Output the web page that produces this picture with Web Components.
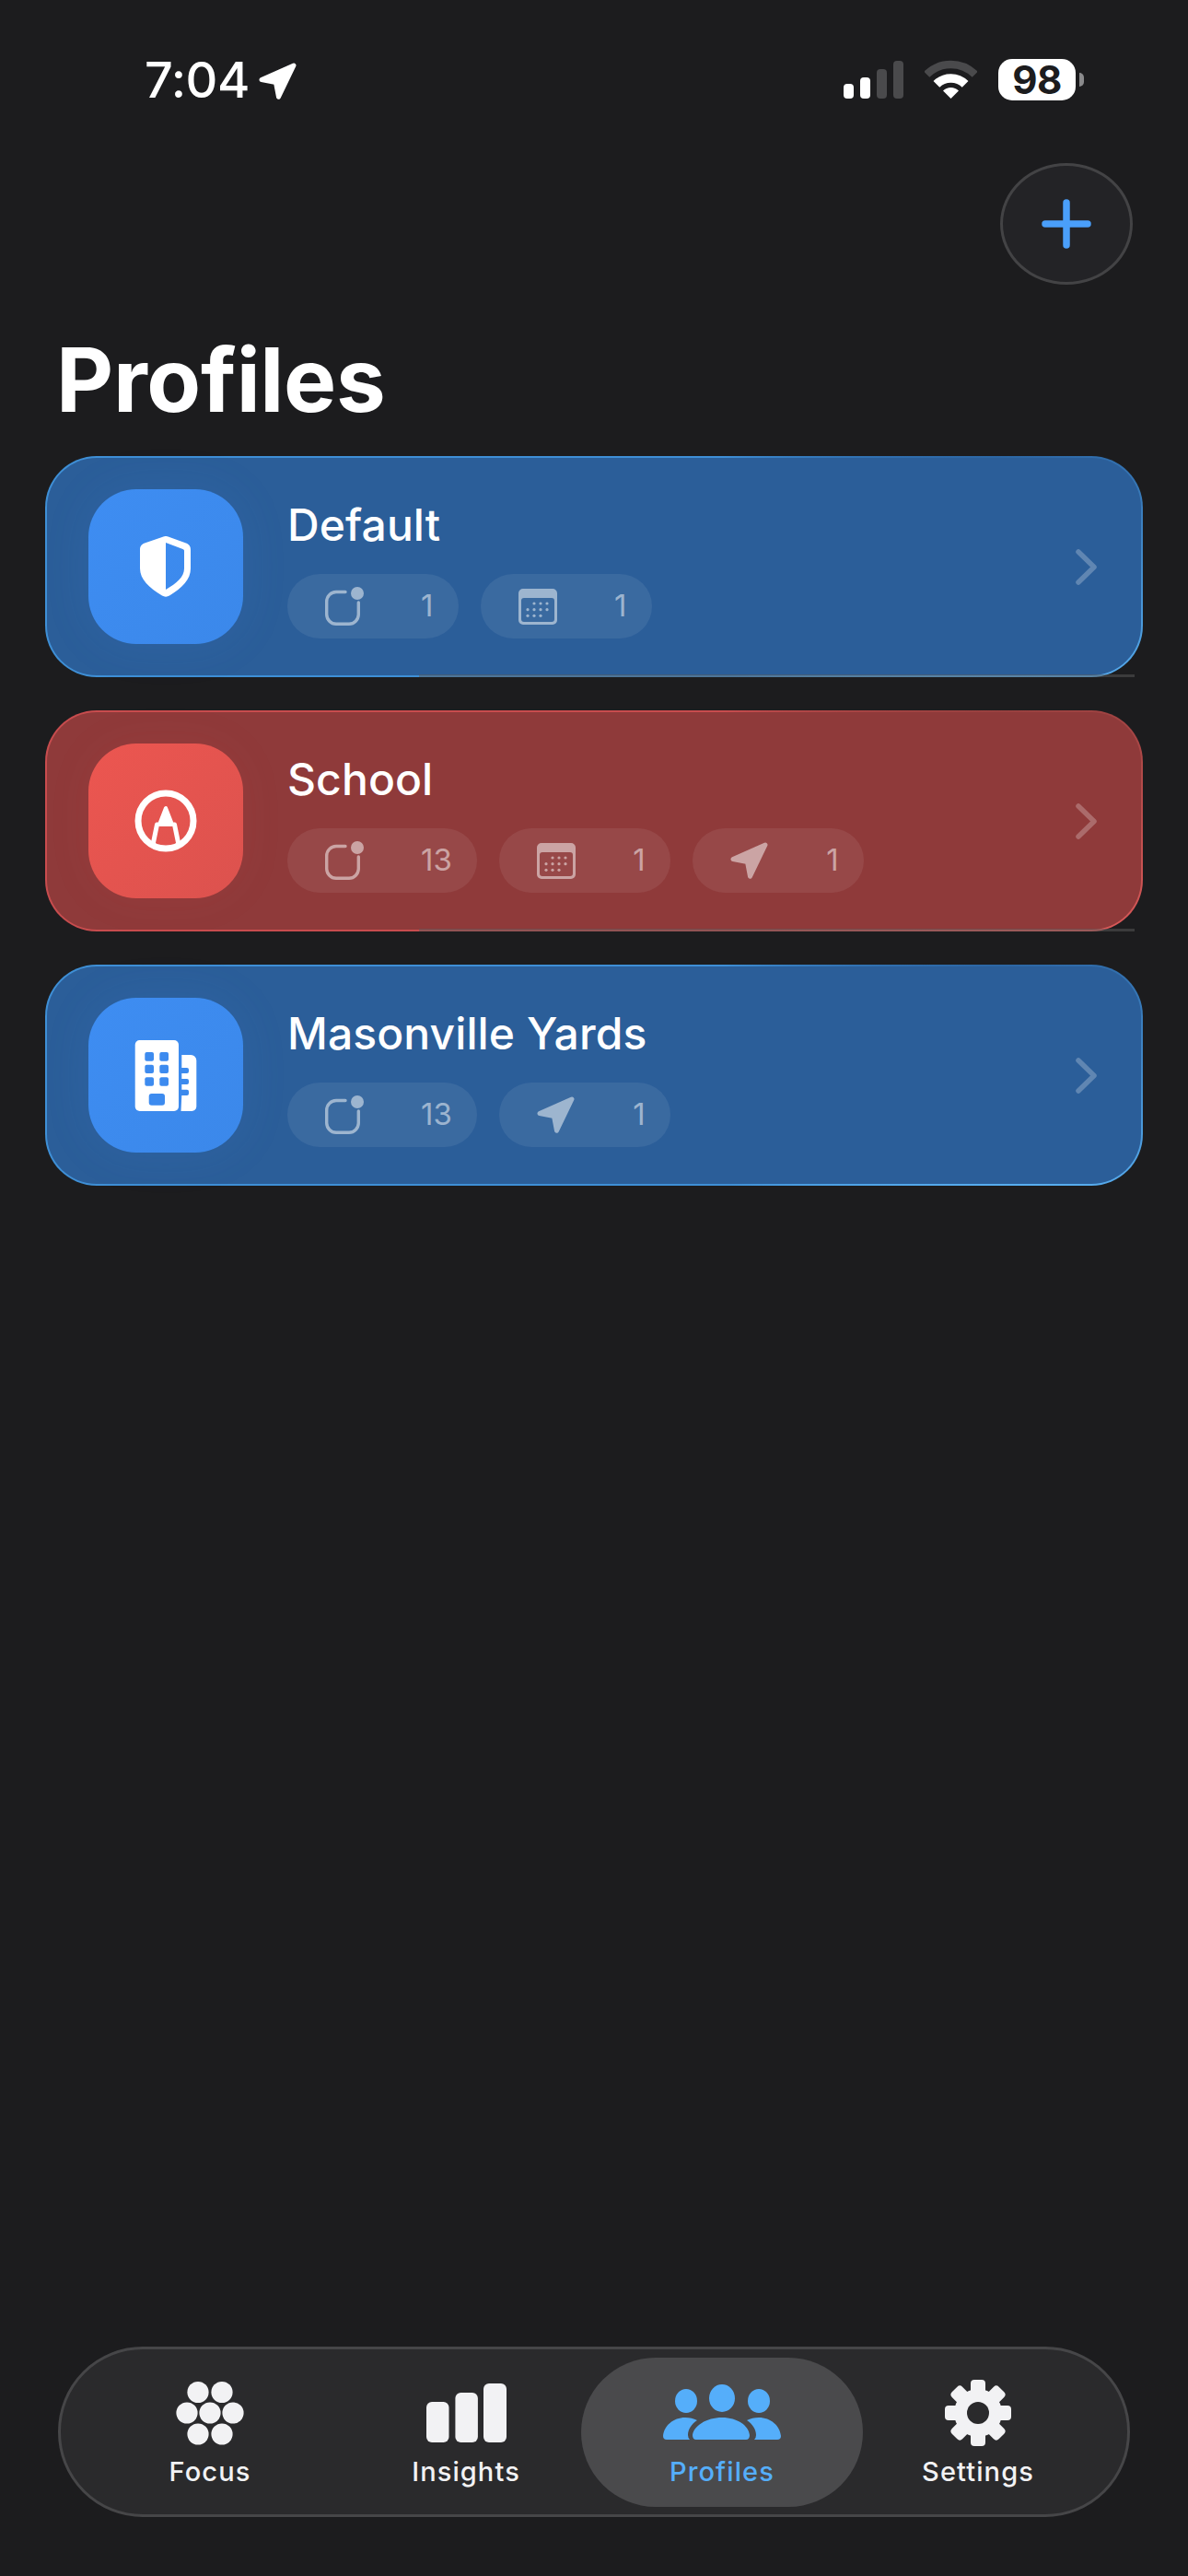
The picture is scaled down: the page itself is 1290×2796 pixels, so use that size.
<!DOCTYPE html>
<html lang="en">
<head>
<meta charset="utf-8">
<title>Profiles</title>
<style>
  html, body { margin: 0; background: #1c1c1e; }
  body { font-family: Inter, "Noto Sans", sans-serif; color: #fff; }
</style>
</head>
<body>
<profiles-screen>
  <status-bar slot="status"></status-bar>
  <add-button slot="action"></add-button>
  <span slot="title">Profiles</span>

  <profile-card tone="blue" separator>
    <tile-icon slot="icon" kind="shield"></tile-icon>
    <span slot="name">Default</span>
    <info-pill kind="reminder" count="1"></info-pill>
    <info-pill kind="calendar" count="1"></info-pill>
  </profile-card>

  <profile-card tone="red" separator>
    <tile-icon slot="icon" kind="pencil"></tile-icon>
    <span slot="name">School</span>
    <info-pill kind="reminder" count="13"></info-pill>
    <info-pill kind="calendar" count="1"></info-pill>
    <info-pill kind="location" count="1"></info-pill>
  </profile-card>

  <profile-card tone="blue">
    <tile-icon slot="icon" kind="building"></tile-icon>
    <span slot="name">Masonville Yards</span>
    <info-pill kind="reminder" count="13"></info-pill>
    <info-pill kind="location" count="1"></info-pill>
  </profile-card>

  <tab-bar slot="tabs">
    <tab-item kind="focus">Focus</tab-item>
    <tab-item kind="insights">Insights</tab-item>
    <tab-item kind="profiles" active>Profiles</tab-item>
    <tab-item kind="settings">Settings</tab-item>
  </tab-bar>
</profiles-screen>

<script>
const define = (name, css, html, setup) => {
  customElements.define(name, class extends HTMLElement {
    constructor() {
      super();
      this.attachShadow({ mode: 'open' });
    }
    connectedCallback() {
      if (this.shadowRoot.childElementCount) return;
      this.shadowRoot.innerHTML = `<style>${css}</style>${typeof html === 'function' ? html(this) : html}`;
      if (setup) setup(this);
    }
  });
};

const arrow = (w, h, color) => `<svg width="${w}" height="${h}" viewBox="0 0 41 40" fill="${color}" stroke="${color}" stroke-width="5" stroke-linejoin="round"><path d="M3 18.5 38 3 21.5 37.2 18.5 21.5Z"/></svg>`;

const pillIcons = {
  reminder: `<svg width="42" height="42" viewBox="0 0 42 42" fill="none" stroke="currentColor" stroke-width="3.400" stroke-linecap="round"><path d="M22 5.500H12A10.500 10.500 0 0 0 1.700 16V30A10.500 10.500 0 0 0 12 40.300H26A10.500 10.500 0 0 0 36.300 30V17"/><circle cx="35" cy="7" r="7" fill="currentColor" stroke="none"/></svg>`,
  calendar: `<svg width="42" height="39" viewBox="0 0 42 39" fill="currentColor"><path fill-rule="evenodd" d="M5 0H37a5 5 0 0 1 5 5V34a5 5 0 0 1-5 5H5a5 5 0 0 1-5-5V5a5 5 0 0 1 5-5ZM6 10a3 3 0 0 0-3 3V33a3 3 0 0 0 3 3H36a3 3 0 0 0 3-3V13a3 3 0 0 0-3-3Z"/><g><circle cx="17" cy="16" r="1.600"/><circle cx="24" cy="16" r="1.600"/><circle cx="31" cy="16" r="1.600"/><circle cx="10" cy="22.700" r="1.600"/><circle cx="17" cy="22.700" r="1.600"/><circle cx="24" cy="22.700" r="1.600"/><circle cx="31" cy="22.700" r="1.600"/><circle cx="10" cy="29.300" r="1.600"/><circle cx="17" cy="29.300" r="1.600"/><circle cx="24" cy="29.300" r="1.600"/></g></svg>`,
  location: arrow(41, 40, 'currentColor')
};

const tileIcons = {
  shield: `<path fill="#fff" fill-rule="evenodd" d="M84 51C85 51 86 51 88 52L106 58.500C109.500 60 111 62 111 66V86C111 98 102 107 88 115.500C85.500 117 82.500 117 80 115.500C66 107 56 98 56 86V66C56 62 57.500 60 61 58.500L80 52C82 51 83 51 84 51ZM84 58V109C96 102 104 95 104 86V67C104 66 103.500 65.500 102.500 65Z"/>`,
  pencil: `<circle cx="84" cy="84" r="30" fill="none" stroke="#fff" stroke-width="7"/><path d="M84 70 77 88H91Z" fill="#fff" stroke="#fff" stroke-width="4" stroke-linejoin="round"/><path d="M74.500 88 70 110M93.500 88 98 110" fill="none" stroke="#fff" stroke-width="5" stroke-linecap="round"/>`,
  building: `<rect x="50.700" y="46" width="47.300" height="77" rx="5" fill="#fff"/><g fill="#3d8bef"><rect x="61.300" y="59" width="9.700" height="9.700" rx="2"/><rect x="77.300" y="59" width="9.700" height="9.700" rx="2"/><rect x="61.300" y="72.700" width="9.700" height="9.300" rx="2"/><rect x="77.300" y="72.700" width="9.700" height="9.300" rx="2"/><rect x="61.300" y="86.300" width="9.700" height="9.400" rx="2"/><rect x="77.300" y="86.300" width="9.700" height="9.400" rx="2"/><rect x="65.700" y="104" width="17.300" height="12.700" rx="3"/></g><path fill="#fff" d="M101.300 62H111.300A6 6 0 0 1 117.300 68V118A5 5 0 0 1 112.300 123H100.500L101.300 106H107A2 2 0 0 0 109 104V101.700A2 2 0 0 0 107 99.700H101.300V94H107A2 2 0 0 0 109 92V90A2 2 0 0 0 107 88H101.300V82H107A2 2 0 0 0 109 80V78A2 2 0 0 0 107 76H101.300Z"/>`
};

const c = '#f2f2f4';
const tabIcons = {
  focus: `<svg width="74" height="72" viewBox="0 0 74 72" fill="${c}"><circle cx="24" cy="13.500" r="11.600"/><circle cx="50" cy="13.500" r="11.600"/><circle cx="12" cy="36" r="11.600"/><circle cx="37" cy="36" r="11.600"/><circle cx="62" cy="36" r="11.600"/><circle cx="24" cy="59" r="11.600"/><circle cx="50" cy="59" r="11.600"/></svg>`,
  insights: `<svg width="87" height="72" viewBox="0 0 87 72" fill="${c}"><rect x="0" y="24" width="24.500" height="44" rx="6"/><rect x="31.400" y="14" width="24.500" height="54" rx="6"/><rect x="62" y="4" width="25" height="64" rx="6"/></svg>`,
  profiles: `<svg width="128" height="72" viewBox="0 0 128 72" fill="#55aefa"><ellipse cx="25" cy="23" rx="12" ry="13"/><ellipse cx="64" cy="20" rx="14" ry="15"/><ellipse cx="104" cy="23" rx="12" ry="13"/><path d="M35 65H4Q0 65 0 61C1 50 11 41 24 41C29 41 33 42 37 44C31 48 27 54 27 60Q27 63 29 65ZM36 65Q32 65 32 60C33 50 47 41 64 41C81 41 93 50 94 60Q94 65 90 65ZM91 65H124Q128 65 128 61C127 50 117 41 104 41C99 41 95 42 91 44C97 48 101 54 101 60Q101 63 99 65Z"/></svg>`,
  settings: `<svg width="72" height="72" viewBox="-36 -36 72 72"><defs><mask id="m"><rect x="-36" y="-36" width="72" height="72" fill="#fff"/><circle r="12" fill="#000"/></mask></defs><g fill="${c}" mask="url(#m)"><circle r="26"/><rect x="-8" y="-36" width="16" height="72" rx="4"/><rect x="-8" y="-36" width="16" height="72" rx="4" transform="rotate(45)"/><rect x="-8" y="-36" width="16" height="72" rx="4" transform="rotate(90)"/><rect x="-8" y="-36" width="16" height="72" rx="4" transform="rotate(135)"/></g></svg>`
};

define('profiles-screen', `
  :host { display: flex; flex-direction: column; box-sizing: border-box; height: 2796px; overflow: hidden; background: #1c1c1e; }
  header { display: flex; justify-content: flex-end; padding: 68px 60px 0 0; }
  h1 { margin: 0; padding: 45px 0 0 61px; font: 700 96px/116px Inter, sans-serif; letter-spacing: -.3px; color: #fff; height: 116px; }
  .list { display: flex; flex-direction: column; gap: 36px; padding: 25px 49px 0; }
  footer { margin-top: auto; padding: 0 63px 64px; }
`, `
  <slot name="status"></slot>
  <header><slot name="action"></slot></header>
  <h1><slot name="title"></slot></h1>
  <div class="list"><slot></slot></div>
  <footer><slot name="tabs"></slot></footer>
`);

define('status-bar', `
  :host { display: flex; align-items: flex-start; height: 45px; padding: 64px 113px 0 157px; box-sizing: content-box; }
  .time { font: 500 54px/45px Inter, sans-serif; color: #fff; letter-spacing: -.4px; margin-right: 10px; }
  .loc { margin-top: 4px; }
  .right { margin-left: auto; display: flex; align-items: flex-start; }
  .signal { display: flex; align-items: flex-end; gap: 7px; height: 41px; margin: 2px 23px 0 0; }
  .signal i { width: 11px; border-radius: 4px; background: #fff; }
  .signal i.off { background: #4a4a4c; }
  .wifi { margin: 1px 23px 0 0; display: block; }
  .batt { width: 84px; height: 45px; border-radius: 15px; background: #fff; color: #1c1c1e; font: 700 42px/46px Inter, sans-serif; text-align: center; letter-spacing: -.5px; }
  .nub { width: 5px; height: 15px; margin: 15px 0 0 4px; background: #8a8a8c; border-radius: 0 5px 5px 0; }
`, `
  <span class="time">7:04</span>
  <span class="loc">${arrow(41, 40, '#fff')}</span>
  <div class="right">
    <div class="signal"><i style="height:16px"></i><i style="height:23px"></i><i class="off" style="height:32px"></i><i class="off" style="height:41px"></i></div>
    <svg class="wifi" width="57" height="42" viewBox="0 0 57 42" fill="none"><path d="M2.300 15.800A37 37 0 0 1 54.700 15.800" stroke="#4a4a4c" stroke-width="8.500"/><path d="M12.900 26.400A22 22 0 0 1 44.100 26.400" stroke="#fff" stroke-width="9.500"/><path d="M28.500 42 20 33.500A12 12 0 0 1 37 33.500Z" fill="#fff"/></svg>
    <div class="batt">98</div><div class="nub"></div>
  </div>
`);

define('add-button', `
  :host { display: grid; place-items: center; box-sizing: border-box; width: 144px; height: 132px; border-radius: 50%; background: #232326; border: 3px solid #434345; box-shadow: 0 0 30px rgba(255,255,255,.012); }
`, `<svg width="54" height="54" viewBox="0 0 54 54" fill="none" stroke="#4a9ffa" stroke-width="7.500" stroke-linecap="round"><path d="M27 4V50M4 27H50"/></svg>`);

define('tile-icon', `
  :host { display: block; width: 168px; height: 168px; }
  svg { display: block; }
`, el => `<svg width="168" height="168" viewBox="0 0 168 168">${tileIcons[el.getAttribute('kind')]}</svg>`);

define('info-pill', `
  :host { display: flex; align-items: center; box-sizing: border-box; height: 70px; border-radius: 35px; padding: 0 27.500px 0 41px; background: rgba(255,255,255,.075); color: #fff; }
  .ico { display: flex; width: 42px; height: 42px; align-items: center; margin-right: 62px; opacity: .5; }
  .n { font: 400 33px/1 Inter, sans-serif; margin-top: -2px; color: rgba(255,255,255,.5); }
`, el => `<span class="ico">${pillIcons[el.getAttribute('kind')]}</span><span class="n">${el.getAttribute('count')}</span>`);

define('profile-card', `
  :host { position: relative; display: flex; align-items: center; box-sizing: border-box; height: 240px; padding: 0 48px 0 45px; border: 2.500px solid transparent; border-radius: 56px; color: #fff; }
  :host([tone="blue"]) { --tile: linear-gradient(135deg,#3e8df2,#3b88ea); --glow: rgba(70,140,230,.12); background: linear-gradient(#2b5e99,#2b5e99) padding-box, conic-gradient(from 75deg,#2c66a4 0,#58aef0 8%,#3e8fd6 15%,#3e8fd6 93%,#2c66a4 100%) border-box; }
  :host([tone="red"]) { --tile: linear-gradient(135deg,#ec5650,#dc524e); --glow: rgba(235,85,80,.07); background: linear-gradient(#8f3a3a,#8f3a3a) padding-box, conic-gradient(from 75deg,#98403f 0,#dd5a5a 8%,#c84c4e 15%,#c84c4e 93%,#98403f 100%) border-box; }
  .tile { width: 168px; height: 168px; border-radius: 52px; background: var(--tile); box-shadow: 0 0 50px var(--glow); flex: none; }
  .body { margin: 3.500px 0 0 48px; display: flex; flex-direction: column; gap: 24.500px; }
  .name { font: 550 48px/58px Inter, sans-serif; letter-spacing: .1px; }
  .pills { display: flex; gap: 24px; }
  .chev { margin-left: auto; display: block; }
  :host([separator])::after { content: ""; position: absolute; left: 404px; right: 7px; bottom: -1.500px; height: 3px; background: rgba(90,90,90,.5); }
`, `
  <div class="tile"><slot name="icon"></slot></div>
  <div class="body">
    <div class="name"><slot name="name"></slot></div>
    <div class="pills"><slot></slot></div>
  </div>
  <svg class="chev" width="23" height="39" viewBox="0 0 23 39" fill="none" stroke="rgba(255,255,255,.25)" stroke-width="5.500" stroke-linecap="round" stroke-linejoin="round"><path d="M3 3 20 19.500 3 36"/></svg>
`);

define('tab-bar', `
  :host { display: flex; box-sizing: border-box; height: 185px; padding: 9px 23px 8px; border: 3px solid #464648; border-radius: 92px; background: #2a2a2c; }
`, `<slot></slot>`);

define('tab-item', `
  :host { display: flex; flex: none; width: 278px; box-sizing: border-box; flex-direction: column; align-items: center; border-radius: 81px; padding-top: 24px; font: 450 29px/36px Inter, sans-serif; letter-spacing: 1.100px; color: #f2f2f4; }
  :host([active]) { width: 306px; background: #4a4a4c; color: #55aefa; margin: 0 -14px; font-weight: 500; }
  .ico { display: grid; place-items: center; height: 72px; margin-bottom: 10px; }
  svg { display: block; }
`, el => `<div class="ico">${tabIcons[el.getAttribute('kind')]}</div><slot></slot>`);
</script>
</body>
</html>
